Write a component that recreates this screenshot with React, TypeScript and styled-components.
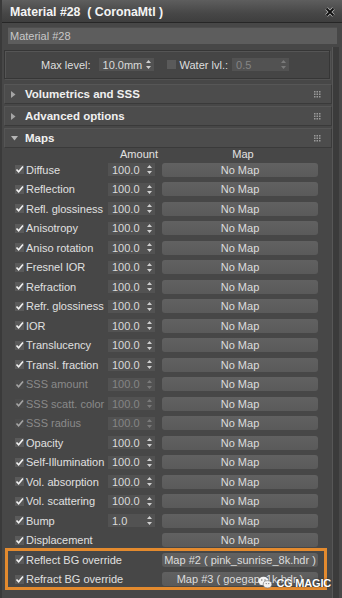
import React from "react";
import styled, { createGlobalStyle } from "styled-components";

const Global = createGlobalStyle`
  html, body { margin: 0; padding: 0; background: #454545; }
  body { font-family: "Liberation Sans", Arial, sans-serif; font-size: 11px; color: #dcdcdc; }
  * { box-sizing: border-box; }
`;

const Window = styled.div`
  position: relative;
  width: 342px;
  height: 598px;
  overflow: hidden;
  background: #474747;
  display: flex;
  flex-direction: column;
  border-left: 2px solid #3a3a3a;
`;

const TitleBar = styled.div`
  height: 23px;
  flex: none;
  display: flex;
  align-items: center;
  justify-content: space-between;
  padding: 1px 7px 0 8px;
  background: linear-gradient(#5e5e5e, #474747 60%, #3e3e3e);
  border-bottom: 1px solid #262626;
  color: #f4f4f4;
  font-weight: bold;
  font-size: 12.3px;
  white-space: pre;
`;

const NameRow = styled.div`
  flex: none;
  padding: 4px 5px 3px 6px;
`;

const NameField = styled.div`
  height: 17px;
  background: #5d5d5d;
  color: #c8c8c8;
  font-size: 11px;
  display: flex;
  align-items: center;
  padding-left: 2px;
  border-top: 1px solid #4e4e4e;
`;

const ScrollArea = styled.div`
  flex: 1;
  display: flex;
  min-height: 0;
`;

const Column = styled.div`
  flex: 1;
  padding: 3px 0 0 2px;
  display: flex;
  flex-direction: column;
`;

const ScrollStrip = styled.div`
  width: 10px;
  flex: none;
  border-left: 1px solid #575757;
  background: linear-gradient(90deg, #3b3b3b 0 6px, #484848 6px);
`;

const Panel = styled.div`
  height: 29px;
  margin-right: 2px;
  border: 1px solid #363636;
  box-shadow: inset 1px 1px 0 #555, 1px 1px 0 #525252;
  background: #454545;
  display: flex;
  align-items: center;
  padding-left: 36px;
`;

const FieldLabel = styled.span<{ $gap: number }>`
  font-size: 11px;
  color: #dedede;
  margin-right: ${(p) => p.$gap}px;
`;

const SpinBox = styled.div<{ $w: number; $dim?: boolean }>`
  width: ${(p) => p.$w}px;
  height: 13px;
  background: #525252;
  color: ${(p) => (p.$dim ? "#858585" : "#dadada")};
  display: flex;
  align-items: center;
  justify-content: space-between;
  padding: 0 3px 0 4px;
  font-size: 11px;
  flex: none;
`;

const Gap = styled.div<{ $w: number }>`
  width: ${(p) => p.$w}px;
  flex: none;
`;

const RollHeader = styled.div<{ $mt: number }>`
  height: 20px;
  margin-top: ${(p) => p.$mt}px;
  background: #4c4c4c;
  border: 1px solid #3a3a3a;
  border-top-color: #565656;
  border-left-color: #555;
  display: flex;
  align-items: center;
  padding: 0 10px 0 6px;
  font-weight: bold;
  font-size: 11.5px;
  color: #f0f0f0;
`;

const Arrow = styled.span`
  width: 14px;
  display: flex;
  align-items: center;
  flex: none;
`;

const HeadTitle = styled.span`
  flex: 1;
`;

const MapsBody = styled.div`
  position: relative;
  display: flex;
  flex-direction: column;
`;

const ColHeader = styled.div`
  height: 12px;
  display: flex;
  align-items: center;
  font-size: 11px;
  color: #e2e2e2;
`;

const ColAmount = styled.div`
  margin-left: 112px;
  width: 46px;
  text-align: center;
`;

const ColMap = styled.div`
  margin-left: 7px;
  width: 148px;
  text-align: center;
`;

const Row = styled.div<{ $dim?: boolean }>`
  height: 19.5px;
  display: flex;
  align-items: center;
  padding-left: 11px;
  color: ${(p) => (p.$dim ? "#8a8a8a" : "#e0e0e0")};
  font-size: 11px;
`;

const Check = styled.div<{ $dim?: boolean }>`
  width: 9px;
  height: 9px;
  background: ${(p) => (p.$dim ? "#505050" : "#5a5a5a")};
  display: flex;
  align-items: center;
  justify-content: center;
  flex: none;
  margin-right: 2px;
  opacity: ${(p) => (p.$dim ? 0.55 : 1)};
`;

const Label = styled.div`
  width: 82px;
  white-space: nowrap;
  overflow: visible;
  flex: none;
`;

const SpinSlot = styled.div`
  width: 47px;
  flex: none;
`;

const MapButton = styled.div<{ $align?: string }>`
  width: 156px;
  height: 14px;
  margin-left: 7px;
  background: linear-gradient(#616161, #5a5a5a);
  border-radius: 3px;
  display: flex;
  align-items: center;
  justify-content: center;
  color: #dcdcdc;
  font-size: 11px;
  white-space: nowrap;
  overflow: hidden;
  flex: none;
`;

const Highlight = styled.div`
  position: relative;
  &::after {
    content: "";
    position: absolute;
    top: -2px;
    bottom: -1px;
    left: 1px;
    right: 5px;
    border: 3px solid #e38a2e;
    pointer-events: none;
  }
`;

const Watermark = styled.div`
  position: absolute;
  right: 11px;
  bottom: 9px;
  display: flex;
  align-items: center;
  gap: 4px;
  color: #ffffff;
  font-size: 11px;
  font-weight: bold;
  letter-spacing: -0.2px;
  text-shadow: 0 0 2px rgba(0,0,0,0.6);
`;

const SpinArrows = ({ dim }: { dim?: boolean }) => (
  <svg width="5" height="9" viewBox="0 0 5 9">
    <path d="M2.5 0 L5 3 L0 3 Z M0 6 L5 6 L2.5 9 Z" fill={dim ? "#7a7a7a" : "#cfcfcf"} />
  </svg>
);

const CheckMark = () => (
  <svg width="9" height="9" viewBox="0 0 9 9">
    <path d="M1.5 4.5 L3.6 6.8 L8 1.5" fill="none" stroke="#f2f2f2" strokeWidth="1.6" />
  </svg>
);

const Grip = () => (
  <svg width="7" height="7" viewBox="0 0 7 7">
    {[0, 2.5, 5].map((x) =>
      [0, 2.5, 5].map((y) => <rect key={`${x}-${y}`} x={x} y={y} width="1.5" height="1.5" fill="#9a9a9a" />)
    )}
  </svg>
);

const CloseX = () => (
  <svg width="10" height="10" viewBox="0 0 10 10">
    <path d="M1.5 1.5 L8.5 8.5 M8.5 1.5 L1.5 8.5" stroke="#bdbdbd" strokeWidth="3.4" />
    <path d="M1.5 1.5 L8.5 8.5 M8.5 1.5 L1.5 8.5" stroke="#111" strokeWidth="2" />
  </svg>
);

const Tri = ({ open }: { open?: boolean }) =>
  open ? (
    <svg width="7" height="5" viewBox="0 0 7 5">
      <path d="M0 0 L7 0 L3.5 4.5 Z" fill="#b5b5b5" />
    </svg>
  ) : (
    <svg width="5" height="7" viewBox="0 0 5 7">
      <path d="M0 0 L4.5 3.5 L0 7 Z" fill="#a5a5a5" />
    </svg>
  );

const WeChat = () => (
  <svg width="14" height="13" viewBox="0 0 14 13">
    <ellipse cx="5.5" cy="5" rx="5.2" ry="4.3" fill="#f3f3f3" />
    <ellipse cx="9.5" cy="8.3" rx="4.3" ry="3.6" fill="#f3f3f3" stroke="#666" strokeWidth="0.6" />
    <circle cx="3.8" cy="4" r="0.7" fill="#666" />
    <circle cx="7" cy="4" r="0.7" fill="#666" />
    <circle cx="8.2" cy="7.6" r="0.55" fill="#666" />
    <circle cx="10.8" cy="7.6" r="0.55" fill="#666" />
  </svg>
);

type MapRow = { label: string; amount: string | null; map: string; dim?: boolean };

const rows: MapRow[] = [
  { label: "Diffuse", amount: "100.0", map: "No Map" },
  { label: "Reflection", amount: "100.0", map: "No Map" },
  { label: "Refl. glossiness", amount: "100.0", map: "No Map" },
  { label: "Anisotropy", amount: "100.0", map: "No Map" },
  { label: "Aniso rotation", amount: "100.0", map: "No Map" },
  { label: "Fresnel IOR", amount: "100.0", map: "No Map" },
  { label: "Refraction", amount: "100.0", map: "No Map" },
  { label: "Refr. glossiness", amount: "100.0", map: "No Map" },
  { label: "IOR", amount: "100.0", map: "No Map" },
  { label: "Translucency", amount: "100.0", map: "No Map" },
  { label: "Transl. fraction", amount: "100.0", map: "No Map" },
  { label: "SSS amount", amount: "100.0", map: "No Map", dim: true },
  { label: "SSS scatt. color", amount: "100.0", map: "No Map", dim: true },
  { label: "SSS radius", amount: "100.0", map: "No Map", dim: true },
  { label: "Opacity", amount: "100.0", map: "No Map" },
  { label: "Self-Illumination", amount: "100.0", map: "No Map" },
  { label: "Vol. absorption", amount: "100.0", map: "No Map" },
  { label: "Vol. scattering", amount: "100.0", map: "No Map" },
  { label: "Bump", amount: "1.0", map: "No Map" },
  { label: "Displacement", amount: null, map: "No Map" },
];

const overrides: MapRow[] = [
  { label: "Reflect BG override", amount: null, map: "Map #2 ( pink_sunrise_8k.hdr )" },
  { label: "Refract BG override", amount: null, map: "Map #3 ( goegap_1k.hdr )" },
];

const MapLine = ({ r }: { r: MapRow }) => (
  <Row $dim={r.dim}>
    <Check $dim={r.dim}>
      <CheckMark />
    </Check>
    <Label>{r.label}</Label>
    <SpinSlot>
      {r.amount !== null && (
        <SpinBox $w={47} $dim={r.dim}>
          <span>{r.amount}</span>
          <SpinArrows dim={r.dim} />
        </SpinBox>
      )}
    </SpinSlot>
    <MapButton>{r.map}</MapButton>
  </Row>
);

export default function App() {
  return (
    <>
      <Global />
      <Window>
        <TitleBar>
          <span>Material #28  ( CoronaMtl )</span>
          <CloseX />
        </TitleBar>
        <NameRow>
          <NameField>Material #28</NameField>
        </NameRow>
        <ScrollArea>
          <Column>
            <Panel>
              <FieldLabel $gap={8}>Max level:</FieldLabel>
              <SpinBox $w={55}>
                <span>10.0mm</span>
                <SpinArrows />
              </SpinBox>
              <Gap $w={13} />
              <Check>
                <svg width="9" height="9" />
              </Check>
              <Gap $w={2} />
              <FieldLabel $gap={4}>Water lvl.:</FieldLabel>
              <SpinBox $w={57} $dim>
                <span>0.5</span>
                <SpinArrows dim />
              </SpinBox>
            </Panel>
            <RollHeader $mt={5}>
              <Arrow>
                <Tri />
              </Arrow>
              <HeadTitle>Volumetrics and SSS</HeadTitle>
              <Grip />
            </RollHeader>
            <RollHeader $mt={2}>
              <Arrow>
                <Tri />
              </Arrow>
              <HeadTitle>Advanced options</HeadTitle>
              <Grip />
            </RollHeader>
            <RollHeader $mt={2}>
              <Arrow>
                <Tri open />
              </Arrow>
              <HeadTitle>Maps</HeadTitle>
              <Grip />
            </RollHeader>
            <MapsBody>
              <ColHeader>
                <ColAmount>Amount</ColAmount>
                <ColMap>Map</ColMap>
              </ColHeader>
              {rows.map((r) => (
                <MapLine key={r.label} r={r} />
              ))}
              <Highlight>
                {overrides.map((r) => (
                  <MapLine key={r.label} r={r} />
                ))}
              </Highlight>
            </MapsBody>
          </Column>
          <ScrollStrip />
        </ScrollArea>
        <Watermark>
          <WeChat />
          <span>CG MAGIC</span>
        </Watermark>
      </Window>
    </>
  );
}
